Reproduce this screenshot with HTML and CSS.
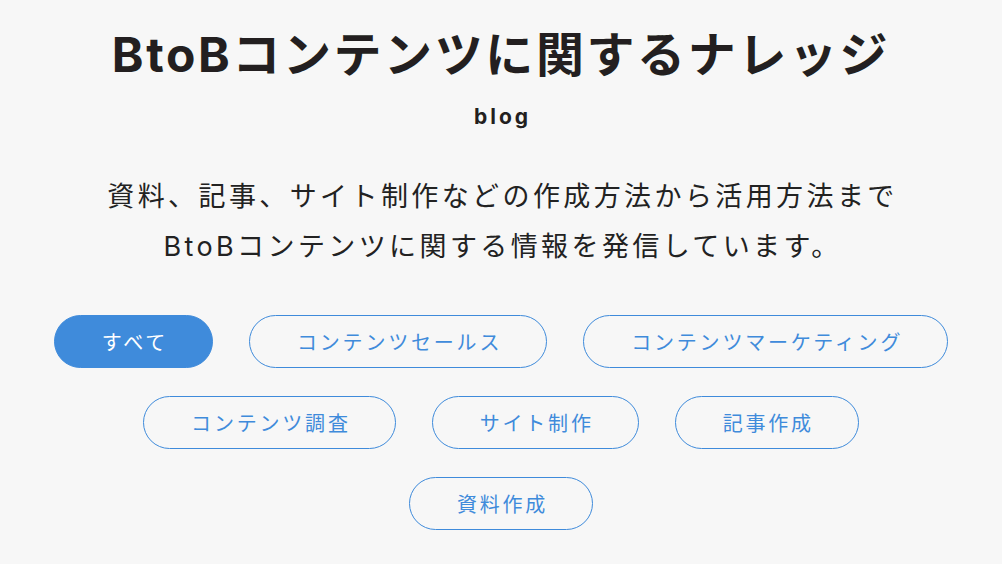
FILE: index.html
```html
<!DOCTYPE html>
<html lang="ja">
<head>
<meta charset="utf-8">
<title>BtoBコンテンツに関するナレッジ</title>
<link rel="stylesheet" href="styles.css">
</head>
<body>
<main class="knowledge">
  <h1 class="knowledge-title">BtoBコンテンツに関するナレッジ</h1>
  <p class="knowledge-sub">blog</p>
  <p class="knowledge-lead">資料、記事、サイト制作などの作成方法から活用方法まで<br>BtoBコンテンツに関する情報を発信しています。</p>
  <ul class="tags">
    <li><a class="tag tag-active" href="#">すべて</a></li>
    <li><a class="tag" href="#">コンテンツセールス</a></li>
    <li><a class="tag" href="#">コンテンツマーケティング</a></li>
    <li><a class="tag" href="#">コンテンツ調査</a></li>
    <li><a class="tag" href="#">サイト制作</a></li>
    <li><a class="tag" href="#">記事作成</a></li>
    <li><a class="tag" href="#">資料作成</a></li>
  </ul>
</main>
</body>
</html>
```

FILE: styles.css
```css
* { box-sizing: border-box; }
html, body {
  margin: 0;
  padding: 0;
  background: #f7f7f7;
}
body {
  font-family: "Inter", "Noto Sans CJK JP", sans-serif;
  color: #231f20;
}
.knowledge {
  display: flex;
  flex-direction: column;
  align-items: center;
  padding-top: 25px;
}
.knowledge-title {
  margin: 0;
  font-size: 48px;
  line-height: 60px;
  font-weight: 700;
  letter-spacing: 2.6px;
  text-align: center;
}
.knowledge-sub {
  margin: 20px 0 0;
  font-size: 21px;
  line-height: 24px;
  font-weight: 700;
  letter-spacing: 3px;
  padding-left: 3px;
}
.knowledge-lead {
  margin: 43px 0 0;
  font-size: 27px;
  line-height: 50px;
  letter-spacing: 3.4px;
  text-align: center;
  color: #222;
  padding-left: 3px;
}
.tags {
  list-style: none;
  margin: 43px 0 0;
  padding: 0;
  width: 920px;
  display: flex;
  flex-wrap: wrap;
  justify-content: center;
  column-gap: 36px;
  row-gap: 28px;
}
.tag {
  display: flex;
  align-items: center;
  justify-content: center;
  height: 53px;
  padding: 0 44px 0 47px;
  border: 1px solid #3f8bdb;
  border-radius: 27px;
  font-family: "Noto Sans CJK JP", sans-serif;
  font-size: 20px;
  font-weight: 400;
  letter-spacing: 2.8px;
  color: #3f8bdb;
  text-decoration: none;
  white-space: nowrap;
}
.tag-active {
  background: #3f8bdb;
  color: #fff;
}
```
